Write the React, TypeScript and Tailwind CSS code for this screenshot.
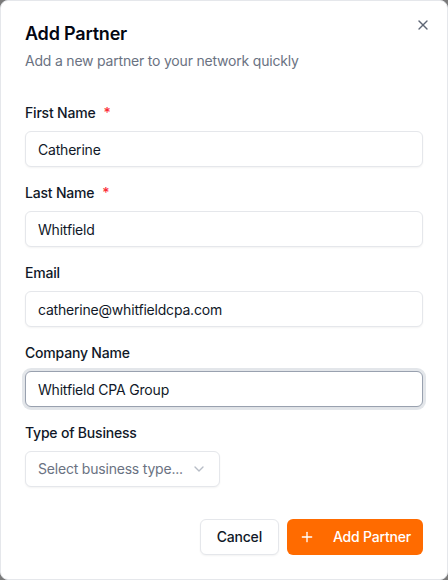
import { X, Plus, ChevronDown } from "lucide-react";

const FIELDS = [
  { label: "First Name", value: "Catherine", required: true },
  { label: "Last Name", value: "Whitfield", required: true },
  { label: "Email", value: "catherine@whitfieldcpa.com" },
  { label: "Company Name", value: "Whitfield CPA Group", focused: true },
];

export default function App() {
  return (
    <div className="min-h-screen bg-[#7a7a7a] tracking-[-0.2px]" style={{ fontFamily: "Inter, 'Noto Sans', sans-serif" }}>
      <div className="relative h-[580px] w-full rounded-lg border border-gray-200 bg-white p-6 text-gray-950">
        {/* Close */}
        <button className="absolute right-4 top-4 text-gray-700 opacity-80">
          <X size={16} strokeWidth={2} />
        </button>

        {/* Header */}
        <div className="flex flex-col gap-2">
          <h2 className="text-lg font-semibold leading-none">Add Partner</h2>
          <p className="text-sm leading-5 text-gray-500">Add a new partner to your network quickly</p>
        </div>

        {/* Form */}
        <div className="mt-8 flex flex-col gap-4">
          {FIELDS.map((f) => (
            <div key={f.label} className="flex flex-col gap-2">
              <label className="flex items-center gap-2 text-sm font-medium leading-5 text-gray-900">
                {f.label}
                {f.required && <span className="text-red-500">*</span>}
              </label>
              <input
                readOnly
                value={f.value}
                className={`h-9 w-full rounded-md border bg-white px-3 text-sm tracking-[-0.2px] text-gray-900 shadow-xs outline-none ${
                  f.focused ? "border-gray-400 ring-[3px] ring-gray-300/60" : "border-gray-200"
                }`}
              />
            </div>
          ))}

          <div className="flex flex-col gap-2">
            <label className="text-sm font-medium leading-5 text-gray-900">Type of Business</label>
            <button className="flex h-9 w-fit items-center gap-2 rounded-md border border-gray-200 bg-white px-3 text-sm tracking-[-0.2px] text-gray-500 shadow-xs">
              Select business type...
              <ChevronDown size={16} className="text-gray-400 opacity-70" />
            </button>
          </div>
        </div>

        {/* Footer */}
        <div className="mt-8 flex justify-end gap-2">
          <button className="h-9 rounded-md border border-gray-200 bg-white px-4 text-sm font-medium tracking-[-0.2px] text-gray-900 shadow-xs">
            Cancel
          </button>
          <button className="flex h-9 items-center gap-[18px] rounded-md bg-[#ff6b00] px-3 text-sm font-medium tracking-[-0.2px] text-white">
            <Plus size={16} />
            Add Partner
          </button>
        </div>
      </div>
    </div>
  );
}
